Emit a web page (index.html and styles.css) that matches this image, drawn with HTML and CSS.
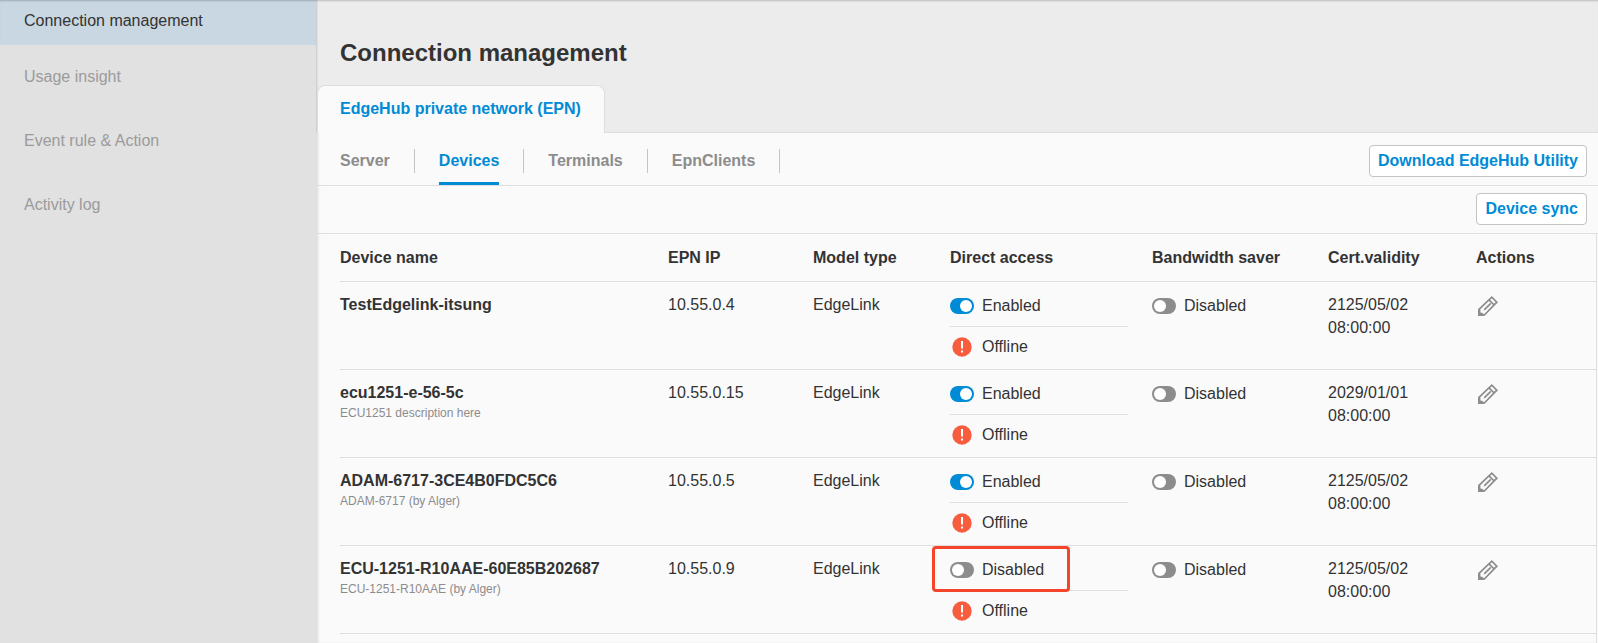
FILE: index.html
```
<!DOCTYPE html>
<html lang="en">
<head>
    <meta charset="UTF-8">
    <meta name="viewport" content="width=device-width, initial-scale=1.0">
    <title>Connection management</title>
    <link rel="stylesheet" href="styles.css">
</head>
<body>
    <!-- shared icons -->
    <svg class="sprite" aria-hidden="true">
        <symbol id="icon-alert" viewBox="0 0 20 20">
            <circle cx="10" cy="10" r="9.7" fill="#f75c3f"/>
            <path d="M10 4v7.6M10 13.4v2.2" stroke="#fff" stroke-width="2"/>
        </symbol>
        <symbol id="icon-edit" viewBox="0 0 20 20">
            <g fill="none" stroke="#8c8c8c" stroke-width="1.7">
                <path d="M1 19v-5.6L13.8 1.2 18.8 6.2 6.4 19z"/>
                <path d="M11 3.8l5.2 5.2"/>
                <path d="M6.2 13.8l6.6-6.4"/>
            </g>
            <path d="M.2 13.2l2.2.6v2.6l2.4.6 1.6 2.9H.2z" fill="#8c8c8c"/>
        </symbol>
    </svg>

    <div class="page">
        <nav class="sidebar">
            <a href="#" class="sidebar-item active">Connection management</a>
            <a href="#" class="sidebar-item">Usage insight</a>
            <a href="#" class="sidebar-item">Event rule &amp; Action</a>
            <a href="#" class="sidebar-item">Activity log</a>
        </nav>

        <main class="content">
            <header class="content-header">
                <h1>Connection management</h1>
                <div class="tabs">
                    <a href="#" class="tab">EdgeHub private network (EPN)</a>
                </div>
            </header>

            <div class="subnav">
                <nav class="subnav-links">
                    <a href="#">Server</a>
                    <span class="separator"></span>
                    <a href="#" class="active">Devices</a>
                    <span class="separator"></span>
                    <a href="#">Terminals</a>
                    <span class="separator"></span>
                    <a href="#">EpnClients</a>
                    <span class="separator"></span>
                </nav>
                <button type="button" class="button">Download EdgeHub Utility</button>
            </div>

            <div class="toolbar">
                <button type="button" class="button">Device sync</button>
            </div>

            <div class="table-wrap">
                <table class="devices">
                    <thead>
                        <tr>
                            <th class="col-name">Device name</th>
                            <th class="col-ip">EPN IP</th>
                            <th class="col-model">Model type</th>
                            <th class="col-access">Direct access</th>
                            <th class="col-saver">Bandwidth saver</th>
                            <th class="col-cert">Cert.validity</th>
                            <th class="col-actions">Actions</th>
                        </tr>
                    </thead>
                    <tbody>
                        <tr>
                            <td><div class="device-name">TestEdgelink-itsung</div></td>
                            <td>10.55.0.4</td>
                            <td>EdgeLink</td>
                            <td>
                                <label class="status"><input type="checkbox" class="toggle" checked>Enabled</label>
                                <div class="status connection"><svg class="alert"><use href="#icon-alert"/></svg>Offline</div>
                            </td>
                            <td><label class="status"><input type="checkbox" class="toggle">Disabled</label></td>
                            <td>2125/05/02<br>08:00:00</td>
                            <td><button type="button" class="edit" aria-label="Edit"><svg><use href="#icon-edit"/></svg></button></td>
                        </tr>
                        <tr>
                            <td>
                                <div class="device-name">ecu1251-e-56-5c</div>
                                <div class="device-desc">ECU1251 description here</div>
                            </td>
                            <td>10.55.0.15</td>
                            <td>EdgeLink</td>
                            <td>
                                <label class="status"><input type="checkbox" class="toggle" checked>Enabled</label>
                                <div class="status connection"><svg class="alert"><use href="#icon-alert"/></svg>Offline</div>
                            </td>
                            <td><label class="status"><input type="checkbox" class="toggle">Disabled</label></td>
                            <td>2029/01/01<br>08:00:00</td>
                            <td><button type="button" class="edit" aria-label="Edit"><svg><use href="#icon-edit"/></svg></button></td>
                        </tr>
                        <tr>
                            <td>
                                <div class="device-name">ADAM-6717-3CE4B0FDC5C6</div>
                                <div class="device-desc">ADAM-6717 (by Alger)</div>
                            </td>
                            <td>10.55.0.5</td>
                            <td>EdgeLink</td>
                            <td>
                                <label class="status"><input type="checkbox" class="toggle" checked>Enabled</label>
                                <div class="status connection"><svg class="alert"><use href="#icon-alert"/></svg>Offline</div>
                            </td>
                            <td><label class="status"><input type="checkbox" class="toggle">Disabled</label></td>
                            <td>2125/05/02<br>08:00:00</td>
                            <td><button type="button" class="edit" aria-label="Edit"><svg><use href="#icon-edit"/></svg></button></td>
                        </tr>
                        <tr>
                            <td>
                                <div class="device-name">ECU-1251-R10AAE-60E85B202687</div>
                                <div class="device-desc">ECU-1251-R10AAE (by Alger)</div>
                            </td>
                            <td>10.55.0.9</td>
                            <td>EdgeLink</td>
                            <td>
                                <label class="status highlight"><input type="checkbox" class="toggle">Disabled</label>
                                <div class="status connection"><svg class="alert"><use href="#icon-alert"/></svg>Offline</div>
                            </td>
                            <td><label class="status"><input type="checkbox" class="toggle">Disabled</label></td>
                            <td>2125/05/02<br>08:00:00</td>
                            <td><button type="button" class="edit" aria-label="Edit"><svg><use href="#icon-edit"/></svg></button></td>
                        </tr>
                    </tbody>
                </table>
            </div>
        </main>
    </div>
</body>
</html>
```
FILE: styles.css
```
*, *::before, *::after {
    box-sizing: border-box;
}
body {
    margin: 0;
    font-family: "Liberation Sans", Arial, sans-serif;
    font-size: 16px;
    line-height: 23px;
    color: #333;
    background-color: #fafafa;
}
a {
    text-decoration: none;
}
.sprite {
    display: none;
}
.page {
    display: flex;
    min-height: 100vh;
}

/* sidebar */
.sidebar {
    flex: 0 0 316px;
    background-color: #e1e1e1;
}
.sidebar-item {
    display: block;
    padding: 20px 24px;
    line-height: 24px;
    color: #9b9b9b;
}
.sidebar-item.active {
    padding: 9px 24px 12px;
    color: #333;
    background-color: #c8d7e1;
    box-shadow: inset 0 2px 2px -1px rgba(0,0,0,0.2);
}

/* content */
.content {
    flex: 1;
    min-width: 0;
    box-shadow: inset 3px 0 3px -1px rgba(0,0,0,0.12);
}
.content-header {
    background-color: #ececec;
    border-bottom: 1px solid #dedede;
    box-shadow: inset 0 2px 2px -1px rgba(0,0,0,0.2), inset 2px 0 2px -1px rgba(0,0,0,0.15);
}
h1 {
    margin: 0;
    padding: 37px 24px 16px;
    font-size: 24px;
    line-height: 32px;
}
.tabs {
    display: flex;
    margin-bottom: -1px;
    padding-left: 1px;
}
.tab {
    padding: 11px 23px 13px 22px;
    border: 1px solid #dedede;
    border-bottom: none;
    border-radius: 8px 8px 0 0;
    font-weight: bold;
    color: #008bd6;
    background-color: #fafafa;
}
.subnav {
    display: flex;
    justify-content: space-between;
    align-items: center;
    height: 53px;
    padding: 4px 11px 0 24px;
    border-bottom: 1px solid #dedede;
}
.subnav-links {
    display: flex;
    align-items: center;
    height: 100%;
}
.subnav-links a {
    display: flex;
    align-items: center;
    height: 100%;
    font-weight: bold;
    color: #8c8c8c;
    border-top: 1px solid transparent;
    border-bottom: 3px solid transparent;
}
.subnav-links a.active {
    color: #008bd6;
    border-bottom-color: #008bd6;
}
.separator {
    width: 1px;
    height: 24px;
    margin: 0 24px;
    background-color: #c4c4c4;
}
.button {
    height: 32px;
    padding: 0 8px;
    border: 1px solid #c4c4c4;
    border-radius: 4px;
    font: bold 16px "Liberation Sans", Arial, sans-serif;
    color: #008bd6;
    background-color: #fff;
    cursor: pointer;
}
.toolbar {
    display: flex;
    justify-content: flex-end;
    padding: 7px 11px 8px;
    border-bottom: 1px solid #dedede;
}

/* device table */
.table-wrap {
    margin-right: 1px;
    padding-left: 24px;
    border-right: 1px solid #dedede;
    min-height: calc(100vh - 234px);
}
.devices {
    width: 100%;
    table-layout: fixed;
    border-collapse: separate;
    border-spacing: 0;
}
.devices th {
    padding: 12px 24px 12px 0;
    text-align: left;
    border-bottom: 1px solid #dedede;
    white-space: nowrap;
}
.devices td {
    padding: 11px 24px 10px 0;
    vertical-align: top;
    border-bottom: 1px solid #dedede;
}
.col-ip { width: 145px; }
.col-model { width: 137px; }
.col-access { width: 202px; }
.col-saver { width: 176px; }
.col-cert { width: 148px; }
.col-actions { width: 120px; }
.device-name {
    font-weight: bold;
}
.device-desc {
    margin-top: 1px;
    font-size: 12px;
    line-height: 16px;
    color: #8c8c8c;
}
.status {
    display: flex;
    align-items: center;
    gap: 8px;
    position: relative;
    height: 24px;
}
.connection {
    height: 33px;
    margin-top: 9px;
    padding: 7px 0 1px;
    border-top: 1px solid #dedede;
}
.alert {
    width: 20px;
    height: 20px;
    margin: 2px 2px 0;
}
.toggle {
    appearance: none;
    display: flex;
    width: 24px;
    height: 16px;
    margin: 2px 0 0;
    padding: 2px;
    border-radius: 8px;
    background-color: #8c8c8c;
    cursor: pointer;
}
.toggle::before {
    content: "";
    width: 12px;
    height: 12px;
    border-radius: 50%;
    background-color: #fff;
}
.toggle:checked {
    justify-content: flex-end;
    background-color: #008bd6;
}
.highlight::after {
    content: "";
    position: absolute;
    top: -11px;
    left: -18px;
    z-index: 1;
    width: 138px;
    height: 46px;
    border: 3px solid #f4452a;
    border-radius: 4px;
}
.edit {
    display: block;
    padding: 3px 2px 2px;
    border: none;
    background: none;
    cursor: pointer;
}
.edit svg {
    display: block;
    width: 20px;
    height: 20px;
}
```
